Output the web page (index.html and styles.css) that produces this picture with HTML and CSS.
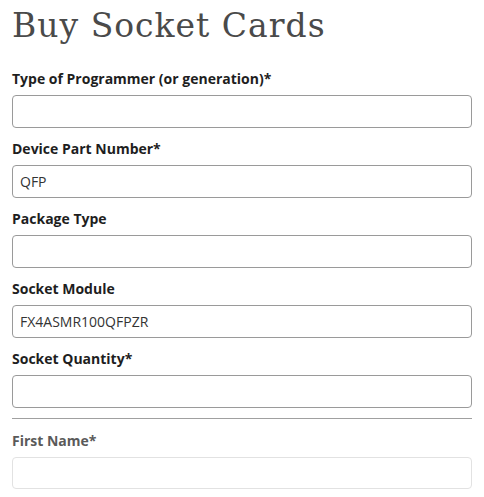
FILE: index.html
```html
<!DOCTYPE html>
<html>
<head>
<meta charset="utf-8">
<link rel="stylesheet" href="styles.css">
</head>
<body>
<h1 class="title">Buy Socket Cards</h1>
<form class="form">
  <div class="field">
    <label class="label">Type of Programmer (or generation)*</label>
    <input class="input" type="text">
  </div>
  <div class="field">
    <label class="label">Device Part Number*</label>
    <input class="input" type="text" value="QFP">
  </div>
  <div class="field">
    <label class="label">Package Type</label>
    <input class="input" type="text">
  </div>
  <div class="field">
    <label class="label">Socket Module</label>
    <input class="input" type="text" value="FX4ASMR100QFPZR">
  </div>
  <div class="field">
    <label class="label">Socket Quantity*</label>
    <input class="input" type="text">
  </div>
  <hr class="divider">
  <div class="field field-muted">
    <label class="label">First Name*</label>
    <input class="input" type="text">
  </div>
</form>
</body>
</html>
```
FILE: styles.css
```css
html, body {
  margin: 0;
  padding: 0;
  background: #fff;
}
body {
  padding: 0 12px;
  font-family: "Open Sans", sans-serif;
  color: #222;
}
.title {
  margin: 0;
  padding-top: 6px;
  height: 69px;
  box-sizing: border-box;
  font-family: "DejaVu Serif", serif;
  font-weight: normal;
  font-size: 33px;
  line-height: 40px;
  color: #4a4a4a;
  letter-spacing: 1px;
}
.form {
  display: flex;
  flex-direction: column;
}
.field {
  display: flex;
  flex-direction: column;
  gap: 6px;
  margin-bottom: 11px;
}
.label {
  display: block;
  font-size: 14px;
  line-height: 20px;
  font-weight: 700;
  color: #1e1e1e;
}
.input {
  box-sizing: border-box;
  width: 100%;
  height: 33px;
  margin: 0;
  padding: 0 7px;
  border: 1px solid #9a9a9a;
  border-radius: 4px;
  font-family: "Open Sans", sans-serif;
  font-size: 14px;
  color: #333;
  background: #fff;
  outline: none;
}
.divider {
  margin: -1px 0 12px 0;
  border: none;
  border-top: 1px solid #a0a0a0;
  height: 0;
}
.field-muted .label {
  color: #5a5a5a;
}
.field-muted .input {
  border-color: #e2e2e2;
  height: 32px;
}
```
